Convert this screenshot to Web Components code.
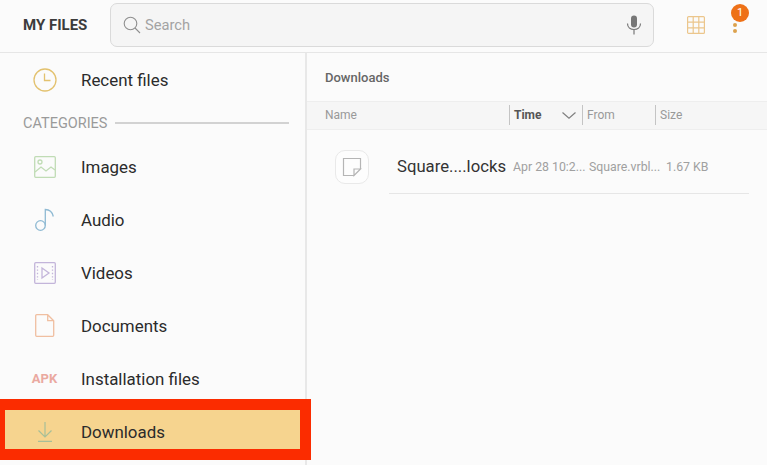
<!DOCTYPE html>
<html>
<head>
<meta charset="utf-8">
<title>My Files</title>
<style>
  html, body { margin: 0; height: 100%; }
  body { background: #fbfbfb; font-family: Roboto, "Liberation Sans", sans-serif; overflow: hidden; }
</style>
</head>
<body>
<files-app></files-app>

<script>
class FilesHeader extends HTMLElement {
  constructor() {
    super();
    this.attachShadow({ mode: 'open' });
  }

  connectedCallback() {
    this.shadowRoot.innerHTML = `
      <style>
        :host {
          display: flex;
          align-items: center;
          box-sizing: border-box;
          height: 53px;
          padding: 0 0 2px 23px;
          border-bottom: 1px solid #e6e6e6;
          background: #fbfbfb;
        }
        .title {
          width: 87px;
          font-size: 15px;
          font-weight: 700;
          color: #3c3c3c;
          white-space: nowrap;
        }
        .search {
          display: flex;
          align-items: center;
          box-sizing: border-box;
          width: 544px;
          height: 44px;
          padding: 0 11px 0 12px;
          background: #f5f5f5;
          border: 1px solid #dadada;
          border-radius: 7px;
        }
        .search span {
          flex: 1;
          margin-left: 4px;
          font-size: 14.7px;
          color: #a3a3a3;
        }
        .grid { margin-left: 33px; }
        .more {
          position: relative;
          width: 10px;
          height: 20px;
          margin-left: 25px;
        }
        .more i {
          position: absolute;
          left: 3px;
          width: 4px;
          height: 4px;
          border-radius: 50%;
          background: #dca24e;
        }
        .badge {
          position: absolute;
          left: 1px;
          top: -11px;
          width: 18px;
          height: 18px;
          border-radius: 50%;
          background: #ee7117;
          color: #fff;
          font-size: 11px;
          line-height: 18px;
          text-align: center;
        }
        svg { display: block; flex: none; }
      </style>
      <div class="title">MY FILES</div>
      <div class="search">
        <svg width="18" height="18" viewBox="0 0 18 18" fill="none" stroke="#8f8f8f" stroke-width="1.1">
          <circle cx="7.5" cy="7.5" r="6.3"/><path d="M12 12l5 5"/>
        </svg>
        <span>Search</span>
        <svg width="16" height="20" viewBox="0 0 16 20" fill="none" stroke="#777" stroke-width="1.2">
          <rect x="5" y="0.5" width="6" height="12" rx="3" fill="#777" stroke="none"/>
          <path d="M1.500 8.500c0 4 3 6 6.500 6s6.500-2 6.500-6M8 14.500v5"/>
        </svg>
      </div>
      <svg class="grid" width="18" height="18" viewBox="0 0 18 18" fill="none" stroke="#ecc68c" stroke-width="1.2">
        <rect x="0.6" y="0.6" width="16.8" height="16.8" rx="1"/>
        <path d="M6.200 .6v16.800M11.800 .6v16.800M.6 6.200h16.800M.6 11.800h16.800"/>
      </svg>
      <div class="more">
        <i style="top:8px"></i>
        <i style="top:14px"></i>
        <span class="badge">1</span>
      </div>
    `;
  }
}

class NavItem extends HTMLElement {
  constructor() {
    super();
    this.attachShadow({ mode: 'open' });
    this.shadowRoot.innerHTML = `
      <style>
        :host {
          display: flex;
          align-items: center;
          height: 53px;
          font-size: 16.9px;
          color: #2b2b2b;
        }
        :host([selected]) { background: #f6d48f; }
        .icon {
          display: flex;
          justify-content: center;
          width: 45px;
          margin-left: 22px;
          margin-right: 14px;
        }
      </style>
      <div class="icon"><slot name="icon"></slot></div>
      <slot></slot>
    `;
  }
}

class FilesSidebar extends HTMLElement {
  constructor() {
    super();
    this.attachShadow({ mode: 'open' });
  }

  connectedCallback() {
    this.shadowRoot.innerHTML = `
      <style>
        :host {
          display: block;
          position: relative;
          box-sizing: border-box;
          width: 307px;
          border-right: 2px solid #e8e8e8;
        }
        .cat {
          display: flex;
          align-items: center;
          height: 34px;
          padding: 0 16px 0 23px;
          font-size: 14.5px;
          color: #9a9a9a;
        }
        .cat i {
          flex: 1;
          height: 2px;
          margin-left: 8px;
          background: #d2d2d2;
        }
        .apk {
          font-size: 13px;
          font-weight: 700;
          color: #eaa9a0;
        }
        svg { display: block; }
        /* red annotation box drawn on the screenshot */
        .mark {
          position: absolute;
          left: 0;
          top: 346px;
          box-sizing: border-box;
          width: 311px;
          height: 61px;
          border: solid #fb2c00;
          border-width: 11px 11px 11px 5px;
          pointer-events: none;
        }
      </style>
      <nav-item>
        <svg slot="icon" width="24" height="24" viewBox="0 0 24 24" fill="none" stroke="#e3c26f" stroke-width="1.3">
          <circle cx="12" cy="12" r="11"/><path d="M11.500 5.500v7h6"/>
        </svg>
        Recent files
      </nav-item>
      <div class="cat">CATEGORIES<i></i></div>
      <nav-item>
        <svg slot="icon" width="22" height="22" viewBox="0 0 22 22" fill="none" stroke="#c0dcb5" stroke-width="1.3">
          <rect x="0.7" y="0.7" width="20.6" height="20.6" rx="1"/>
          <circle cx="6" cy="6" r="2"/>
          <path d="M1 16l6-5 5 4 5-4 4 3"/>
        </svg>
        Images
      </nav-item>
      <nav-item>
        <svg slot="icon" width="22" height="24" viewBox="0 0 22 24" fill="none" stroke="#8fbad3" stroke-width="1.3">
          <circle cx="6.5" cy="17.5" r="4.8"/>
          <path d="M11.300 17.500V1.500c4 0 7 2.500 8 7"/>
        </svg>
        Audio
      </nav-item>
      <nav-item>
        <svg slot="icon" width="22" height="22" viewBox="0 0 22 22" fill="none" stroke="#c3b5da" stroke-width="1.3">
          <rect x="0.7" y="0.7" width="20.6" height="20.6" rx="1"/>
          <path d="M8 6l7 5-7 5z"/>
          <path d="M3.500 4v14M18.500 4v14" stroke-dasharray="1.4 2"/>
        </svg>
        Videos
      </nav-item>
      <nav-item>
        <svg slot="icon" width="20" height="23" viewBox="0 0 20 23" fill="none" stroke="#f0bfa1" stroke-width="1.3">
          <path d="M1.700 .7h11l6 6v14.600a1 1 0 0 1-1 1h-16a1 1 0 0 1-1-1V1.700a1 1 0 0 1 1-1zM12.700 .7v6h6"/>
        </svg>
        Documents
      </nav-item>
      <nav-item><span slot="icon" class="apk">APK</span>Installation files</nav-item>
      <nav-item selected>
        <svg slot="icon" width="16" height="20" viewBox="0 0 16 20" fill="none" stroke="#a7bf98" stroke-width="1.2">
          <path d="M8 0v15M1.500 8.500L8 15l6.500-6.500M1 19.400h14"/>
        </svg>
        Downloads
      </nav-item>
      <div class="mark"></div>
    `;
  }
}

class FileRow extends HTMLElement {
  constructor() {
    super();
    this.attachShadow({ mode: 'open' });
  }

  connectedCallback() {
    this.shadowRoot.innerHTML = `
      <style>
        :host {
          display: flex;
          align-items: flex-start;
          height: 64px;
        }
        .thumb {
          display: flex;
          align-items: center;
          justify-content: center;
          box-sizing: border-box;
          width: 34px;
          height: 34px;
          margin: 20px 0 0 28px;
          background: #fdfdfd;
          border: 1px solid #e9e9e9;
          border-radius: 10px;
        }
        .body {
          display: flex;
          align-items: center;
          box-sizing: border-box;
          width: 360px;
          height: 64px;
          margin-left: 20px;
          padding: 10px 0 0 8px;
          border-bottom: 1px solid #e6e6e6;
          white-space: nowrap;
        }
        .name { width: 116px; font-size: 16.7px; color: #333; }
        .meta { font-size: 12.3px; color: #a0a0a0; }
        .time { width: 76px; }
        .from { width: 77px; }
      </style>
      <div class="thumb">
        <svg width="20" height="20" viewBox="0 0 20 20" fill="none" stroke="#b5b5b5" stroke-width="1.2">
          <path d="M12 18.500H1.500V1.500h17V12zM18.500 12l-6.500 6.500V12z"/>
        </svg>
      </div>
      <div class="body">
        <span class="name">Square....locks</span>
        <span class="meta time">Apr 28 10:2...</span>
        <span class="meta from">Square.vrbl...</span>
        <span class="meta">1.67 KB</span>
      </div>
    `;
  }
}

class FilesList extends HTMLElement {
  constructor() {
    super();
    this.attachShadow({ mode: 'open' });
  }

  connectedCallback() {
    this.shadowRoot.innerHTML = `
      <style>
        :host { display: block; flex: 1; }
        .path {
          display: flex;
          align-items: center;
          box-sizing: border-box;
          height: 48px;
          padding: 0 0 0 18px;
          font-size: 13px;
          font-weight: 500;
          color: #666;
        }
        .cols {
          display: flex;
          align-items: center;
          box-sizing: border-box;
          height: 29px;
          padding-bottom: 1px;
          background: #f6f6f6;
          border-top: 1px solid #eeeeee;
          border-bottom: 1px solid #eeeeee;
          font-size: 12px;
          color: #999;
        }
        .col {
          display: flex;
          align-items: center;
          justify-content: space-between;
          box-sizing: border-box;
          height: 20px;
          padding: 0 4px;
          border-left: 1px solid #c4c4c4;
        }
        .name { width: 202px; padding-left: 18px; border-left: 0; }
        .time { width: 73px; padding-right: 6px; font-weight: 700; color: #555; }
        .from { width: 73px; }
        .size { width: 70px; }
      </style>
      <div class="path">Downloads</div>
      <div class="cols">
        <div class="col name">Name</div>
        <div class="col time">Time
          <svg width="14" height="7" viewBox="0 0 14 7" fill="none" stroke="#808080" stroke-width="1.2"><path d="M.5 .5L7 6.200 13.500 .5"/></svg>
        </div>
        <div class="col from">From</div>
        <div class="col size">Size</div>
      </div>
      <file-row></file-row>
    `;
  }
}

class FilesApp extends HTMLElement {
  constructor() {
    super();
    this.attachShadow({ mode: 'open' });
  }

  connectedCallback() {
    this.shadowRoot.innerHTML = `
      <style>
        :host { display: block; height: 465px; overflow: hidden; }
        .content { display: flex; height: 412px; }
      </style>
      <files-header></files-header>
      <div class="content">
        <files-sidebar></files-sidebar>
        <files-list></files-list>
      </div>
    `;
  }
}

customElements.define('files-header', FilesHeader);
customElements.define('nav-item', NavItem);
customElements.define('files-sidebar', FilesSidebar);
customElements.define('file-row', FileRow);
customElements.define('files-list', FilesList);
customElements.define('files-app', FilesApp);
</script>
</body>
</html>
